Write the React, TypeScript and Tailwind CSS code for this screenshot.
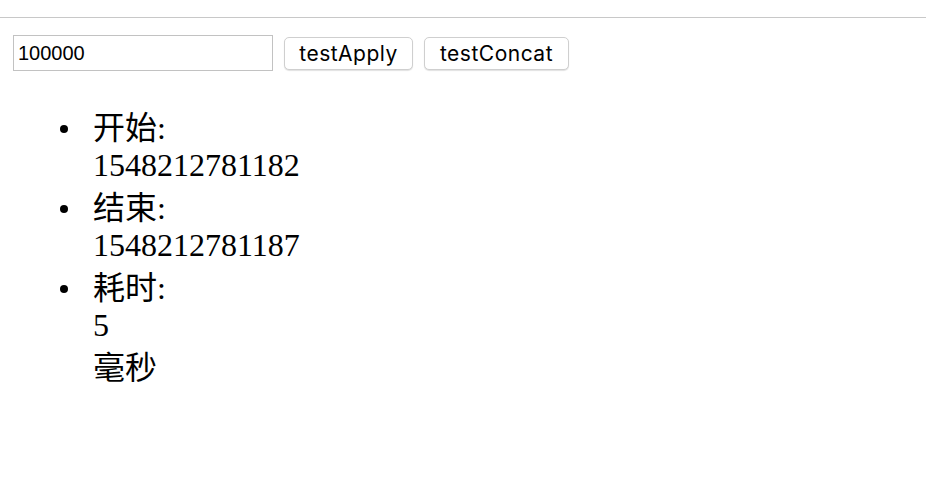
const rows = [
  { label: '开始:', lines: ['1548212781182'] },
  { label: '结束:', lines: ['1548212781187'] },
  { label: '耗时:', lines: ['5', '毫秒'] },
];

// lines holding CJK sit a little lower than the digit lines
const isCjk = (s: string) => /[\u4e00-\u9fff]/.test(s);

export default function App() {
  return (
    <div className="min-h-screen bg-white text-black">
      <div className="h-[18px] border-b border-[#c8c8c8]" />

      <div className="flex items-center gap-[11px] pl-[13px] pt-[17px] font-['Liberation_Sans',Arial,sans-serif] text-[20px]">
        <input
          defaultValue="100000"
          className="h-[36px] w-[260px] border border-[#c2c2c2] px-[4px] outline-none"
        />
        <button className="h-[33px] w-[129px] rounded-[5px] border border-[#cfcfcf] bg-white font-['Inter',sans-serif] text-[21px] tracking-[0.5px] shadow-[0_1px_1px_rgba(0,0,0,0.12)]">
          testApply
        </button>
        <button className="h-[33px] w-[145px] rounded-[5px] border border-[#cfcfcf] bg-white font-['Inter',sans-serif] text-[21px] tracking-[0.5px] shadow-[0_1px_1px_rgba(0,0,0,0.12)]">
          testConcat
        </button>
      </div>

      <ul className="pl-[60px] pt-[33px] font-['Liberation_Serif','Noto_Sans_CJK_SC',serif] text-[32px] leading-[37px]">
        {rows.map((r) => (
          <li key={r.label} className="flex">
            <span className="mr-[25px] mt-[21px] h-[8px] w-[8px] shrink-0 rounded-full bg-black" />
            <div>
              <div className="pt-[6px]">{r.label}</div>
              {r.lines.map((l) => (
                <div key={l} className={isCjk(l) ? 'pt-[6px]' : ''}>
                  {l}
                </div>
              ))}
            </div>
          </li>
        ))}
      </ul>
    </div>
  );
}
